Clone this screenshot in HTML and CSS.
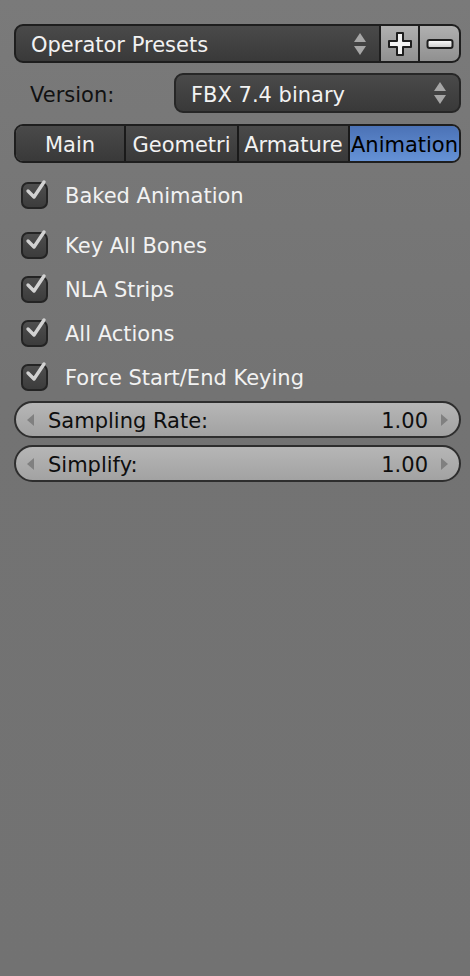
FILE: index.html
```html
<!DOCTYPE html>
<html>
<head>
<meta charset="utf-8">
<link rel="stylesheet" href="styles.css">
</head>
<body>
<div class="panel">
  <div class="row presets">
    <div class="dropdown dark grow">
      <span class="dd-text">Operator Presets</span>
      <svg class="updown" width="14" height="24" viewBox="0 0 14 24"><path d="M7 1 L13 10 L1 10 Z" fill="#a6a6a6"/><path d="M1 14 L13 14 L7 23 Z" fill="#a6a6a6"/></svg>
    </div>
    <div class="btn light plus">
      <svg width="26" height="26" viewBox="0 0 26 26"><path d="M10 2 H16 V10 H24 V16 H16 V24 H10 V16 H2 V10 H10 Z" fill="#f4f4f4" stroke="#1e1e1e" stroke-width="2" stroke-linejoin="round"/></svg>
    </div>
    <div class="btn light minus">
      <svg width="28" height="12" viewBox="0 0 28 12"><defs><linearGradient id="mg" x1="0" y1="0" x2="0" y2="1"><stop offset="0" stop-color="#ffffff"/><stop offset="1" stop-color="#c8c8c8"/></linearGradient></defs><rect x="1.5" y="2" width="25" height="8" rx="2" fill="url(#mg)" stroke="#1e1e1e" stroke-width="2"/></svg>
    </div>
  </div>
  <div class="row version">
    <span class="label">Version:</span>
    <div class="dropdown dark grow ver">
      <span class="dd-text">FBX 7.4 binary</span>
      <svg class="updown" width="14" height="24" viewBox="0 0 14 24"><path d="M7 1 L13 10 L1 10 Z" fill="#a6a6a6"/><path d="M1 14 L13 14 L7 23 Z" fill="#a6a6a6"/></svg>
    </div>
  </div>
  <div class="row tabs">
    <div class="tab t1">Main</div>
    <div class="tab t2">Geometri</div>
    <div class="tab t3">Armature</div>
    <div class="tab t4 active">Animation</div>
  </div>
  <div class="checks">
    <div class="check first"><span class="box"><svg width="27" height="27" viewBox="0 0 27 27"><path d="M6 13 L12 19 L22 4" fill="none" stroke="#d2d2d2" stroke-width="3.4" stroke-linecap="round" stroke-linejoin="round"/></svg></span><span class="ctext">Baked Animation</span></div>
    <div class="check gap"><span class="box"><svg width="27" height="27" viewBox="0 0 27 27"><path d="M6 13 L12 19 L22 4" fill="none" stroke="#d2d2d2" stroke-width="3.4" stroke-linecap="round" stroke-linejoin="round"/></svg></span><span class="ctext">Key All Bones</span></div>
    <div class="check"><span class="box"><svg width="27" height="27" viewBox="0 0 27 27"><path d="M6 13 L12 19 L22 4" fill="none" stroke="#d2d2d2" stroke-width="3.4" stroke-linecap="round" stroke-linejoin="round"/></svg></span><span class="ctext">NLA Strips</span></div>
    <div class="check"><span class="box"><svg width="27" height="27" viewBox="0 0 27 27"><path d="M6 13 L12 19 L22 4" fill="none" stroke="#d2d2d2" stroke-width="3.4" stroke-linecap="round" stroke-linejoin="round"/></svg></span><span class="ctext">All Actions</span></div>
    <div class="check"><span class="box"><svg width="27" height="27" viewBox="0 0 27 27"><path d="M6 13 L12 19 L22 4" fill="none" stroke="#d2d2d2" stroke-width="3.4" stroke-linecap="round" stroke-linejoin="round"/></svg></span><span class="ctext">Force Start/End Keying</span></div>
  </div>
  <div class="sliders">
    <div class="slider">
      <svg class="arr" width="8" height="12" viewBox="0 0 8 12"><path d="M7 0 L7 12 L0 6 Z" fill="#808080"/></svg>
      <span class="s-label">Sampling Rate:</span>
      <span class="s-val">1.00</span>
      <svg class="arr" width="8" height="12" viewBox="0 0 8 12"><path d="M1 0 L1 12 L8 6 Z" fill="#808080"/></svg>
    </div>
    <div class="slider">
      <svg class="arr" width="8" height="12" viewBox="0 0 8 12"><path d="M7 0 L7 12 L0 6 Z" fill="#808080"/></svg>
      <span class="s-label">Simplify:</span>
      <span class="s-val">1.00</span>
      <svg class="arr" width="8" height="12" viewBox="0 0 8 12"><path d="M1 0 L1 12 L8 6 Z" fill="#808080"/></svg>
    </div>
  </div>
</div>
</body>
</html>
```
FILE: styles.css
```css
html, body {
  margin: 0;
  padding: 0;
}
body {
  width: 470px;
  height: 976px;
  background: linear-gradient(#7a7a7a, #737373 40%, #727272);
  font-family: "DejaVu Sans", sans-serif;
  font-size: 21px;
  overflow: hidden;
}
.panel {
  padding: 24px 9px 0 14px;
}
.row {
  display: flex;
  align-items: stretch;
}
.presets {
  height: 39px;
}
.dark {
  background: linear-gradient(#4a4a4a, #393939);
  color: #f2f2f2;
}
.light {
  background: linear-gradient(#b0b0b0, #909090);
}
.dropdown {
  display: flex;
  align-items: center;
  border: 2px solid #1e1e1e;
  border-radius: 9px;
  padding: 0 12px 0 15px;
  box-sizing: border-box;
}
.grow { flex: 1; }
.presets .dropdown {
  border-radius: 9px 0 0 9px;
  border-right-width: 2px;
}
.dd-text {
  flex: 1;
  white-space: nowrap;
  padding-top: 3px;
}
.updown { flex: none; }
.btn {
  display: flex;
  align-items: center;
  justify-content: center;
  border: 2px solid #1e1e1e;
  border-left: none;
  box-sizing: border-box;
}
.plus { width: 39px; }
.minus {
  width: 41px;
  border-radius: 0 9px 9px 0;
}
.version {
  margin-top: 10px;
  height: 40px;
}
.label {
  width: 160px;
  padding-left: 16px;
  padding-top: 3px;
  box-sizing: border-box;
  color: #111;
  display: flex;
  align-items: center;
}
.ver {
  border-color: #262626;
}
.tabs {
  margin-top: 11px;
  height: 39px;
  border: 2px solid #1e1e1e;
  border-radius: 9px;
  overflow: hidden;
  box-sizing: border-box;
}
.tab {
  display: flex;
  align-items: center;
  justify-content: center;
  padding-top: 3px;
  background: linear-gradient(#4a4a4a, #393939);
  color: #f2f2f2;
  white-space: nowrap;
  overflow: hidden;
  box-sizing: border-box;
}
.t1 { width: 110px; border-right: 2px solid #1a1a1a; }
.t2 { width: 113px; border-right: 2px solid #1a1a1a; }
.t3 { width: 111px; border-right: 2px solid #1a1a1a; }
.t4 { flex: 1; }
.tab.active {
  background: linear-gradient(#4b72b6, #6592d6);
  color: #000;
}
.checks {
  margin-top: 10px;
}
.check {
  height: 44px;
  display: flex;
  align-items: center;
  padding-left: 7px;
}
.check.gap { margin-top: 6px; }
.box {
  width: 27px;
  height: 27px;
  box-sizing: border-box;
  border: 2px solid #242424;
  border-radius: 7px;
  background: linear-gradient(#4e4e4e, #3c3c3c);
  position: relative;
  flex: none;
}
.box svg {
  position: absolute;
  left: -1px;
  top: -6px;
  overflow: visible;
}
.ctext {
  margin-left: 17px;
  padding-top: 2px;
  color: #f2f2f2;
  white-space: nowrap;
}
.sliders {
  margin-top: 2px;
  display: flex;
  flex-direction: column;
  gap: 7px;
}
.slider {
  height: 37px;
  border: 2px solid #2e2e2e;
  border-radius: 19px;
  background: linear-gradient(#b6b6b6, #a2a2a2);
  display: flex;
  align-items: center;
  padding: 0 11px 0 11px;
  box-sizing: border-box;
  color: #0e0e0e;
}
.arr { flex: none; }
.s-label {
  margin-left: 13px;
  flex: 1;
  padding-top: 3px;
}
.s-val {
  margin-right: 12px;
  padding-top: 3px;
}
```
